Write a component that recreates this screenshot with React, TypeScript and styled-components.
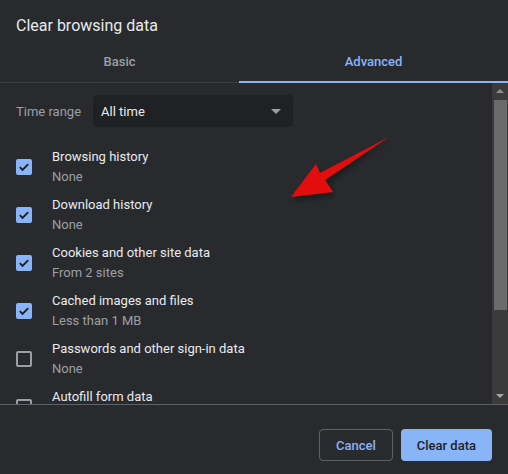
import React from 'react';
import styled, { createGlobalStyle } from 'styled-components';

const GlobalStyle = createGlobalStyle`
  html, body {
    margin: 0;
    padding: 0;
    background: #292a2d;
  }
  * {
    box-sizing: border-box;
  }
`;

const Dialog = styled.div`
  position: relative;
  width: 508px;
  height: 474px;
  overflow: hidden;
  background: #292a2d;
  font-family: Roboto, 'Noto Sans', Arial, sans-serif;
  display: flex;
  flex-direction: column;
`;

const Title = styled.h1`
  margin: 0;
  padding: 16px 16px 0;
  font-size: 16px;
  line-height: 20px;
  font-weight: 400;
  color: #e8eaed;
`;

const TabStrip = styled.div`
  display: grid;
  grid-template-columns: 239px 1fr;
  margin-top: 6px;
  border-bottom: 1px solid #3c4043;
`;

const Tab = styled.div<{ $active?: boolean }>`
  height: 41px;
  margin-bottom: -1px;
  display: flex;
  align-items: center;
  justify-content: center;
  font-size: 13px;
  font-weight: 500;
  color: ${({ $active }) => ($active ? '#8ab4f8' : '#9aa0a6')};
  border-bottom: 2px solid ${({ $active }) => ($active ? '#8ab4f8' : 'transparent')};
`;

const Body = styled.div`
  display: flex;
  height: 322px;
  border-bottom: 1px solid #5f6368;
`;

const List = styled.div`
  flex: 1;
  overflow: hidden;
  padding-top: 12px;
`;

const RangeRow = styled.div`
  display: flex;
  align-items: center;
  gap: 12px;
  padding: 0 16px;
  margin-bottom: 16px;
`;

const RangeLabel = styled.span`
  font-size: 13px;
  color: #9aa0a6;
`;

const Select = styled.div`
  width: 200px;
  height: 32px;
  border-radius: 4px;
  background: #202124;
  display: flex;
  align-items: center;
  justify-content: space-between;
  padding: 0 8px;
  font-size: 13px;
  color: #e8eaed;
`;

const Caret = styled.span`
  width: 0;
  height: 0;
  border-left: 5px solid transparent;
  border-right: 5px solid transparent;
  border-top: 5px solid #9aa0a6;
  margin-right: 4px;
`;

const Item = styled.div`
  display: flex;
  align-items: center;
  gap: 20px;
  height: 48px;
  padding: 4px 16px;
`;

const Box = styled.span<{ $checked?: boolean }>`
  flex: none;
  width: 16px;
  height: 16px;
  border-radius: 2px;
  display: flex;
  align-items: center;
  justify-content: center;
  background: ${({ $checked }) => ($checked ? '#8ab4f8' : 'transparent')};
  border: ${({ $checked }) => ($checked ? 'none' : '2px solid #9aa0a6')};
`;

const Texts = styled.div`
  display: flex;
  flex-direction: column;
  align-self: flex-start;
`;

const ItemTitle = styled.span`
  font-size: 13px;
  line-height: 20px;
  color: #e8eaed;
`;

const ItemSub = styled.span`
  font-size: 13px;
  line-height: 20px;
  color: #9aa0a6;
`;

const Scrollbar = styled.div`
  width: 16px;
  flex: none;
  background: #3b3b3b;
  display: flex;
  flex-direction: column;
  align-items: center;
`;

const ScrollButton = styled.div`
  height: 16px;
  width: 100%;
  display: flex;
  align-items: center;
  justify-content: center;
`;

const Arrow = styled.span<{ $down?: boolean }>`
  width: 0;
  height: 0;
  border-left: 4px solid transparent;
  border-right: 4px solid transparent;
  ${({ $down }) =>
    $down ? 'border-top: 4px solid #a6a6a6;' : 'border-bottom: 4px solid #8f8f8f;'}
`;

const Thumb = styled.div`
  width: 13px;
  height: 210px;
  margin-top: 1px;
  background: #6b6b6b;
`;

const Track = styled.div`
  flex: 1;
`;

const Footer = styled.div`
  display: flex;
  justify-content: flex-end;
  gap: 8px;
  padding: 24px 16px 12px;
`;

const Button = styled.button<{ $primary?: boolean }>`
  height: 32px;
  border-radius: 4px;
  font-family: inherit;
  font-size: 13px;
  font-weight: 500;
  padding: 0 16px;
  background: ${({ $primary }) => ($primary ? '#8ab4f8' : 'transparent')};
  color: ${({ $primary }) => ($primary ? '#202124' : '#8ab4f8')};
  border: ${({ $primary }) => ($primary ? 'none' : '1px solid #5f6368')};
`;

const Pointer = styled.svg`
  position: absolute;
  left: 0;
  top: 0;
  pointer-events: none;
`;

const items = [
  { title: 'Browsing history', sub: 'None', checked: true },
  { title: 'Download history', sub: 'None', checked: true },
  { title: 'Cookies and other site data', sub: 'From 2 sites', checked: true },
  { title: 'Cached images and files', sub: 'Less than 1 MB', checked: true },
  { title: 'Passwords and other sign-in data', sub: 'None', checked: false },
  { title: 'Autofill form data', checked: false },
];

const Check = () => (
  <svg width="12" height="12" viewBox="0 0 12 12">
    <path d="M1.8 6.2 L4.6 9 L10.2 3.2" fill="none" stroke="#202124" strokeWidth="1.9" />
  </svg>
);

export default function App() {
  return (
    <>
      <GlobalStyle />
      <Dialog>
        <Title>Clear browsing data</Title>
        <TabStrip>
          <Tab>Basic</Tab>
          <Tab $active>Advanced</Tab>
        </TabStrip>
        <Body>
          <List>
            <RangeRow>
              <RangeLabel>Time range</RangeLabel>
              <Select>
                All time
                <Caret />
              </Select>
            </RangeRow>
            {items.map((it) => (
              <Item key={it.title}>
                <Box $checked={it.checked}>{it.checked && <Check />}</Box>
                <Texts>
                  <ItemTitle>{it.title}</ItemTitle>
                  {it.sub && <ItemSub>{it.sub}</ItemSub>}
                </Texts>
              </Item>
            ))}
          </List>
          <Scrollbar>
            <ScrollButton>
              <Arrow />
            </ScrollButton>
            <Thumb />
            <Track />
            <ScrollButton>
              <Arrow $down />
            </ScrollButton>
          </Scrollbar>
        </Body>
        <Footer>
          <Button>Cancel</Button>
          <Button $primary>Clear data</Button>
        </Footer>
        <Pointer width="508" height="474" viewBox="0 0 508 474">
          <defs>
            <filter id="shade" x="-20%" y="-20%" width="140%" height="140%">
              <feDropShadow dx="2" dy="3" stdDeviation="3" floodColor="#000" floodOpacity="0.45" />
            </filter>
          </defs>
          <polygon
            points="389,137 325,180 333,192 291,197 316,164 320,173"
            fill="#e3100f"
            filter="url(#shade)"
          />
        </Pointer>
      </Dialog>
    </>
  );
}
